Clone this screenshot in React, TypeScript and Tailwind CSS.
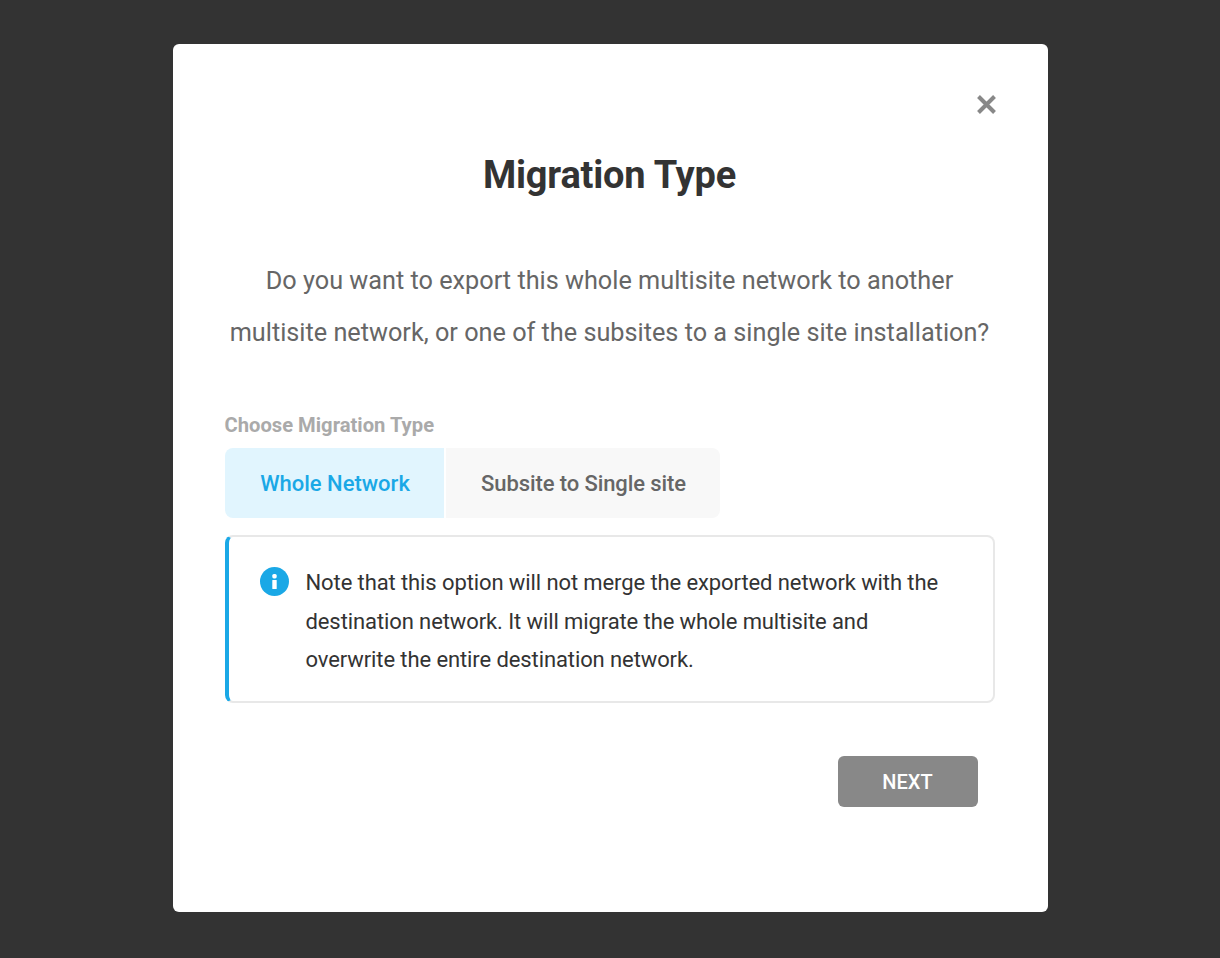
import React from "react";

const App: React.FC = () => {
  return (
    <div className="min-h-[958px] bg-[#333333] pt-[44px] font-['Roboto',sans-serif]">
      <div className="relative mx-auto h-[868px] w-[875px] rounded-[6px] bg-white pl-[52px] pr-[53px] pt-[108px]">
        <button className="absolute right-[50px] top-[49px] text-[#888888]">
          <svg width="23" height="23" viewBox="0 0 23 23" fill="none" stroke="currentColor" strokeWidth="4">
            <path d="M3.5 3.5 L19.5 19.5 M19.5 3.5 L3.5 19.5" />
          </svg>
        </button>

        <h1 className="text-center text-[38px] font-bold leading-[46px] tracking-[-0.2px] text-[#333333]">Migration Type</h1>

        <p className="mt-[57px] text-center text-[25.25px] leading-[52px] text-[#666666]">
          Do you want to export this whole multisite network to another
          <br />
          multisite network, or one of the subsites to a single site installation?
        </p>

        <div className="mt-[52px] text-[20.2px] font-bold leading-[28px] text-[#aaaaaa]">Choose Migration Type</div>

        <div className="mt-[9px] flex gap-[2px] text-[22px] font-medium">
          <div className="flex h-[70px] w-[219px] items-center justify-center rounded-l-[8px] bg-[#e1f5fe] pl-[2px] text-[#1aa8e6]">Whole Network</div>
          <div className="flex h-[70px] w-[274px] items-center justify-center rounded-r-[8px] bg-[#f8f8f8] pl-[2px] tracking-[-0.1px] text-[#666666]">Subsite to Single site</div>
        </div>

        <div className="mt-[17px] flex h-[168px] rounded-[8px] border-2 border-l-4 border-[#e8e8e8] border-l-[#1aa8e6] pl-[31px] pt-[27px]">
          <svg width="29" height="29" viewBox="0 0 29 29" className="mt-[3px] shrink-0">
            <circle cx="14.5" cy="14.5" r="14.5" fill="#1aa8e6" />
            <rect x="12.3" y="13" width="4.4" height="9" rx="0.5" fill="white" />
            <rect x="12.3" y="7" width="4.4" height="4.4" rx="1.6" fill="white" />
          </svg>
          <p className="ml-[17px] text-[22px] leading-[38.5px] tracking-[-0.1px] text-[#333333]">
            Note that this option will not merge the exported network with the
            <br />
            destination network. It will migrate the whole multisite and
            <br />
            overwrite the entire destination network.
          </p>
        </div>

        <div className="mt-[53px] flex justify-end pr-[17px]">
          <button className="h-[51px] w-[140px] rounded-[6px] bg-[#888888] text-[20px] font-medium text-white">NEXT</button>
        </div>
      </div>
    </div>
  );
};

export default App;
